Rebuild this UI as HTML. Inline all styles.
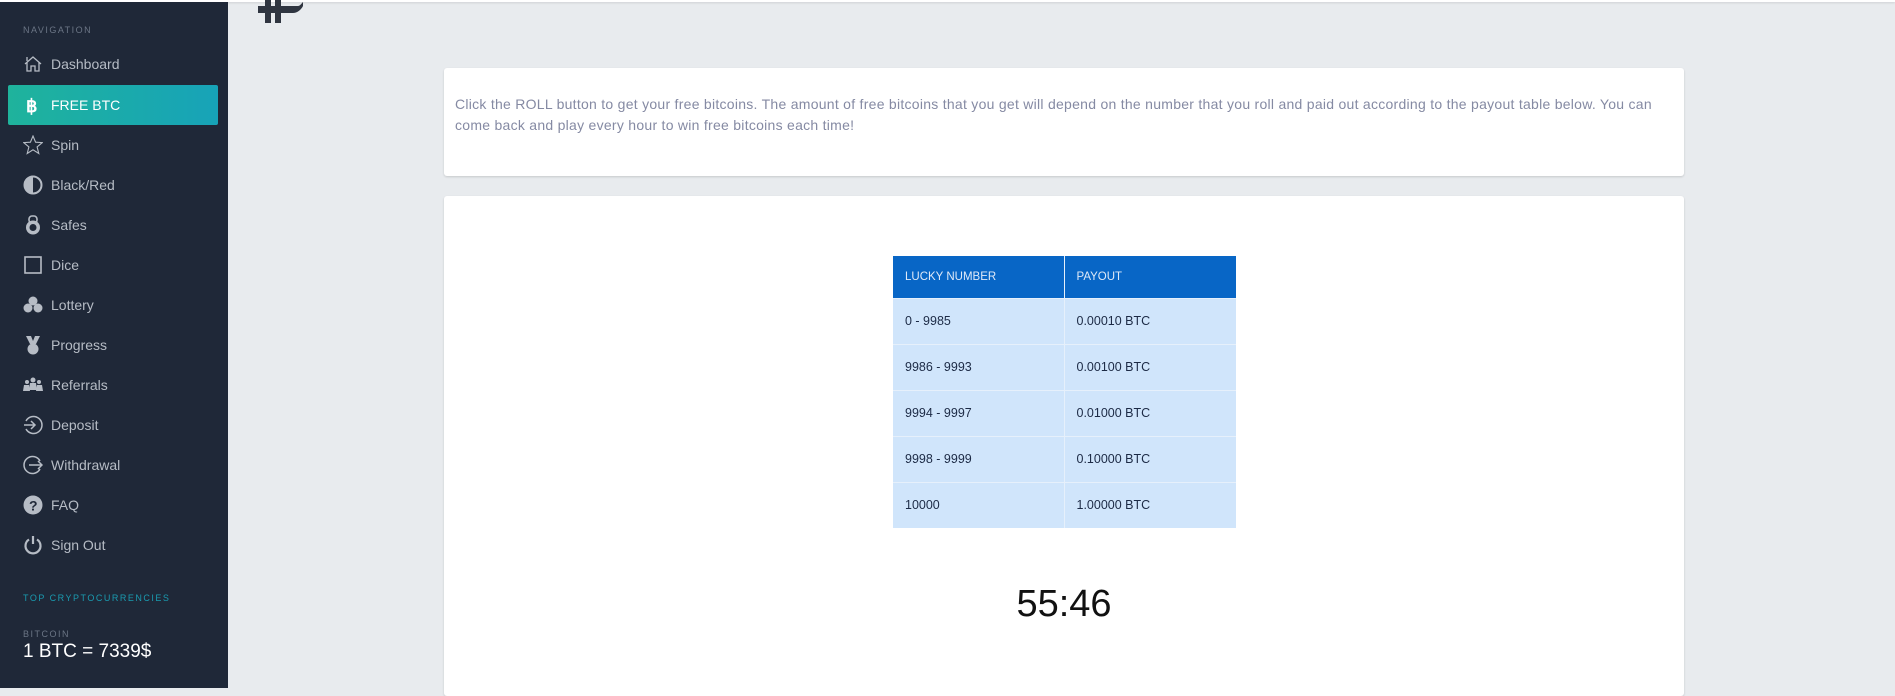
<!DOCTYPE html>
<html><head><meta charset="utf-8"><style>
*{margin:0;padding:0;box-sizing:border-box}
html,body{width:1895px;height:688px;overflow:hidden;background:#e8ebee;font-family:"Liberation Sans",sans-serif}
.top{position:absolute;left:0;top:0;width:1895px;height:2px;background:#fff;box-shadow:0 1px 2px rgba(0,0,0,.12)}
.side{position:absolute;left:0;top:2px;width:228px;height:686px;background:#1f2838}
.lbl{position:absolute;left:23px;font-size:9px;letter-spacing:1.5px;color:#6b7585}
.item{position:absolute;left:8px;width:210px;height:40px;display:flex;align-items:center;padding-left:15px;color:#b6bcc5;font-size:14px}
.item svg{width:20px;height:20px;margin-right:8px;flex:none}
.act{background:linear-gradient(90deg,#1fb39c,#17a3b8);color:#fff;border-radius:2px}
.card{position:absolute;left:444px;width:1240px;background:#fff;border-radius:3px;box-shadow:0 1px 2px rgba(0,0,0,.15)}
.txt{padding:26px 10px 0 11px;font-size:14px;line-height:21px;color:#858aa3;white-space:nowrap;letter-spacing:0.27px}
table{position:absolute;left:449px;top:60px;width:343px;border-collapse:collapse;font-size:12.5px}
th{background:#0866c6;color:#dfe9f7;font-weight:normal;text-align:left;height:42px;padding-left:12px;font-size:11.5px}
th:first-child{width:171px}
td{background:#d0e5fb;color:#1c2a45;height:46px;padding-left:12px;border-top:1px solid #e6f0fb}
th+th,td+td{border-left:1px solid #e6f0fb}
.tm{position:absolute;left:0;width:100%;top:387px;text-align:center;font-size:38px;color:#111}
</style></head><body>
<div class="top"></div>
<svg style="position:absolute;left:255px;top:0" width="50" height="26"><path d="M3 6h40c2 0 3-2 5-4v4c-2 4-6 7-10 7H3z" fill="#2f3540"/><rect x="10" y="0" width="6" height="23" fill="#2f3540"/><rect x="20" y="0" width="6" height="23" fill="#2f3540"/></svg>
<div class="side">
<div class="lbl" style="top:23px">NAVIGATION</div>
<div class="item" style="top:42px"><svg viewBox="0 0 20 20" fill="none" stroke="#b6bcc5" stroke-width="1.3"><path d="M2 10L10 3l8 7M4 8v9h4v-5h4v5h4V8M4 3v4"/></svg>Dashboard</div>
<div class="item act" style="top:83px"><svg viewBox="0 0 20 20"><text x="3" y="17" font-size="18" font-weight="bold" fill="#fff" font-family="Liberation Sans">฿</text></svg>FREE BTC</div>
<div class="item" style="top:123px"><svg viewBox="0 0 20 20" fill="none" stroke="#b6bcc5" stroke-width="1.1"><path d="M10 1l2.6 6.2 6.7.4-5.2 4.3 1.7 6.6L10 14.8l-5.8 3.7 1.7-6.6L.7 7.6l6.7-.4z"/></svg>Spin</div>
<div class="item" style="top:163px"><svg viewBox="0 0 20 20"><circle cx="10" cy="10" r="8.5" fill="none" stroke="#b6bcc5" stroke-width="2"/><path d="M10 1.5a8.5 8.5 0 0 0 0 17z" fill="#b6bcc5"/></svg>Black/Red</div>
<div class="item" style="top:203px"><svg viewBox="0 0 20 20"><rect x="6" y="1" width="8" height="7" rx="3" fill="none" stroke="#b6bcc5" stroke-width="1.6"/><circle cx="10" cy="12.5" r="7" fill="#b6bcc5"/><circle cx="10" cy="12.5" r="3.5" fill="#1f2838"/></svg>Safes</div>
<div class="item" style="top:243px"><svg viewBox="0 0 20 20"><rect x="2" y="2" width="16" height="16" fill="none" stroke="#b6bcc5" stroke-width="1.6"/></svg>Dice</div>
<div class="item" style="top:283px"><svg viewBox="0 0 20 20" fill="#b6bcc5"><circle cx="10" cy="6" r="4.5"/><circle cx="5" cy="13" r="4.5"/><circle cx="15" cy="13" r="4.5"/></svg>Lottery</div>
<div class="item" style="top:323px"><svg viewBox="0 0 20 20" fill="#b6bcc5"><path d="M3 1h5l2 5 2-5h5l-4 8H7z"/><circle cx="10" cy="14" r="5.5"/></svg>Progress</div>
<div class="item" style="top:363px"><svg viewBox="0 0 20 20" fill="#b6bcc5"><circle cx="10" cy="5" r="2.5"/><path d="M6 15l1-7h6l1 7z"/><circle cx="4" cy="7" r="2"/><path d="M0 16l1-6h5l1 6z"/><circle cx="16" cy="7" r="2"/><path d="M13 16l1-6h5l1 6z"/></svg>Referrals</div>
<div class="item" style="top:403px"><svg viewBox="0 0 20 20" fill="none" stroke="#b6bcc5" stroke-width="1.5"><path d="M3 6a8.5 8.5 0 1 1 0 8M1 10h11M8 6l4 4-4 4"/></svg>Deposit</div>
<div class="item" style="top:443px"><svg viewBox="0 0 20 20" fill="none" stroke="#b6bcc5" stroke-width="1.5"><path d="M17 6a8.5 8.5 0 1 0 0 8M6 10h13M15 6l4 4-4 4"/></svg>Withdrawal</div>
<div class="item" style="top:483px"><svg viewBox="0 0 20 20"><circle cx="10" cy="10" r="9.5" fill="#b6bcc5"/><text x="6" y="15.5" font-size="14" font-weight="bold" fill="#1f2838" font-family="Liberation Sans">?</text></svg>FAQ</div>
<div class="item" style="top:523px"><svg viewBox="0 0 20 20" fill="none" stroke="#b6bcc5" stroke-width="2.2"><path d="M6 4.5a7.5 7.5 0 1 0 8 0M10 1v8"/></svg>Sign Out</div>
<div class="lbl" style="top:591px;color:#1a9bb0">TOP CRYPTOCURRENCIES</div>
<div class="lbl" style="top:627px">BITCOIN</div>
<div style="position:absolute;left:23px;top:639px;font-size:19px;color:#fff">1 BTC = 7339$</div>
</div>
<div class="card" style="top:68px;height:108px"><div class="txt">Click the ROLL button to get your free bitcoins. The amount of free bitcoins that you get will depend on the number that you roll and paid out according to the payout table below. You can<br>come back and play every hour to win free bitcoins each time!</div></div>
<div class="card" style="top:196px;height:500px">
<table><tr><th>LUCKY NUMBER</th><th>PAYOUT</th></tr>
<tr><td>0 - 9985</td><td>0.00010 BTC</td></tr>
<tr><td>9986 - 9993</td><td>0.00100 BTC</td></tr>
<tr><td>9994 - 9997</td><td>0.01000 BTC</td></tr>
<tr><td>9998 - 9999</td><td>0.10000 BTC</td></tr>
<tr><td>10000</td><td>1.00000 BTC</td></tr></table>
<div class="tm">55:46</div>
</div>
</body></html>
